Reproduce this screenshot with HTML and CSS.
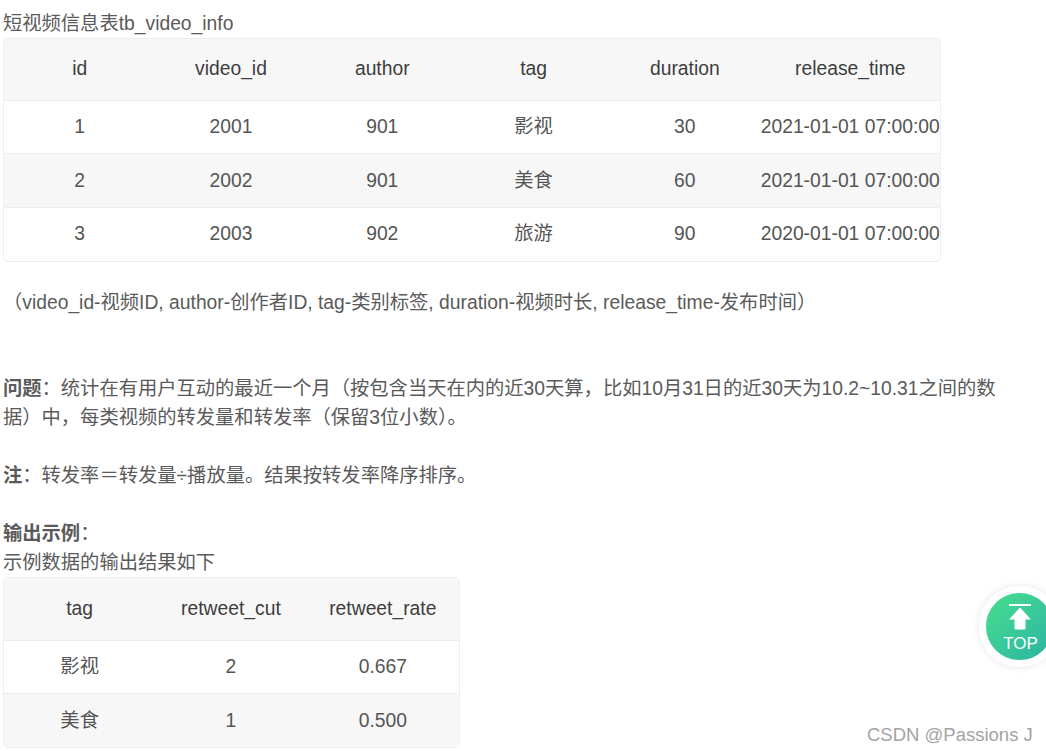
FILE: index.html
```html
<!DOCTYPE html>
<html lang="zh-CN">
<head>
<meta charset="utf-8">
<title>短视频信息表</title>
<link rel="stylesheet" href="styles.css">
</head>
<body>
<main class="article">
  <p class="line title">短视频信息表tb_video_info</p>
  <table class="data wide">
    <colgroup><col class="c1"><col class="c1"><col class="c1"><col class="c1"><col class="c1"><col></colgroup>
    <thead><tr><th>id</th><th>video_id</th><th>author</th><th>tag</th><th>duration</th><th>release_time</th></tr></thead>
    <tbody>
      <tr><td>1</td><td>2001</td><td>901</td><td>影视</td><td>30</td><td>2021-01-01 07:00:00</td></tr>
      <tr class="alt"><td>2</td><td>2002</td><td>901</td><td>美食</td><td>60</td><td>2021-01-01 07:00:00</td></tr>
      <tr class="last"><td>3</td><td>2003</td><td>902</td><td>旅游</td><td>90</td><td>2020-01-01 07:00:00</td></tr>
    </tbody>
  </table>
  <p class="line note">（video_id-视频ID, author-创作者ID, tag-类别标签, duration-视频时长, release_time-发布时间）</p>
  <p class="line question"><strong>问题</strong>：统计在有用户互动的最近一个月（按包含当天在内的近30天算，比如10月31日的近30天为10.2~10.31之间的数据）中，每类视频的转发量和转发率（保留3位小数）。</p>
  <p class="line gap"><strong>注</strong>：转发率＝转发量÷播放量。结果按转发率降序排序。</p>
  <p class="line gap"><strong>输出示例</strong>：</p>
  <p class="line">示例数据的输出结果如下</p>
  <table class="data narrow">
    <colgroup><col class="c1"><col class="c1"><col></colgroup>
    <thead><tr><th>tag</th><th>retweet_cut</th><th>retweet_rate</th></tr></thead>
    <tbody>
      <tr><td>影视</td><td>2</td><td>0.667</td></tr>
      <tr class="alt"><td>美食</td><td>1</td><td>0.500</td></tr>
    </tbody>
  </table>
</main>
<a class="top-btn" href="#">
  <svg class="top-icon" viewBox="0 0 22 26" width="22" height="26" aria-hidden="true">
    <rect x="0" y="0" width="22" height="2" fill="#fff"/>
    <path d="M11 3.5 L22 15.5 L16.5 15.5 L16.5 24.5 Q16.5 25.5 15.5 25.5 L6.5 25.5 Q5.5 25.5 5.5 24.5 L5.5 15.5 L0 15.5 Z" fill="#fff"/>
  </svg>
  <span class="top-label">TOP</span>
</a>
<div class="watermark">CSDN @Passions J</div>
</body>
</html>
```

FILE: styles.css
```css
html, body {
  margin: 0;
  padding: 0;
  height: 751px;
  overflow: hidden;
  background: #fff;
}
body {
  font-family: "Liberation Sans", "Noto Sans CJK SC", sans-serif;
  font-size: 19.3px;
  color: #5a5a5a;
  position: relative;
}
.article {
  width: 1000px;
  padding: 9px 0 0 3px;
}
.line {
  margin: 0;
  line-height: 29px;
}
.line strong { font-weight: 700; }
.note { margin-top: 26px; }
.question { margin-top: 57px; }
.gap { margin-top: 29px; }
.data {
  border-collapse: separate;
  border-spacing: 0;
  table-layout: fixed;
  border: 1px solid #eee;
  border-radius: 5px;
  overflow: hidden;
  background: #fff;
}
.wide { width: 938px; }
.narrow { width: 457px; }
.c1 { width: 151.3px; }
.data th, .data td {
  padding: 0;
  text-align: center;
  white-space: nowrap;
  font-weight: 400;
  line-height: 24px;
}
.data th {
  height: 60px;
  padding-bottom: 1px;
  color: #3d3d3d;
  background: #f7f7f7;
}
.narrow th { height: 61px; }
.data td {
  height: 52px;
  border-top: 1px solid #eee;
  color: #555;
}
.data .alt td {
  height: 53px;
  background: #f7f7f7;
}
.data .last td {
  height: 52px;
  padding-bottom: 1px;
}
.top-btn {
  position: absolute;
  left: 979px;
  top: 586px;
  width: 81px;
  height: 81px;
  box-sizing: border-box;
  border: 7px solid #fff;
  border-radius: 50%;
  background: linear-gradient(135deg, #48df8e, #2ab3a3);
  box-shadow: 0 0 8px rgba(0, 0, 0, 0.1);
  color: #fff;
  text-decoration: none;
  display: flex;
  flex-direction: column;
  align-items: center;
}
.top-icon {
  margin-top: 11px;
  flex: none;
}
.top-label {
  font-size: 17px;
  line-height: 20px;
  margin-top: 4px;
  margin-left: 2px;
}
.watermark {
  position: absolute;
  left: 867px;
  top: 724px;
  font-size: 18.5px;
  line-height: 22px;
  color: #a3a3a3;
  white-space: nowrap;
}
```
